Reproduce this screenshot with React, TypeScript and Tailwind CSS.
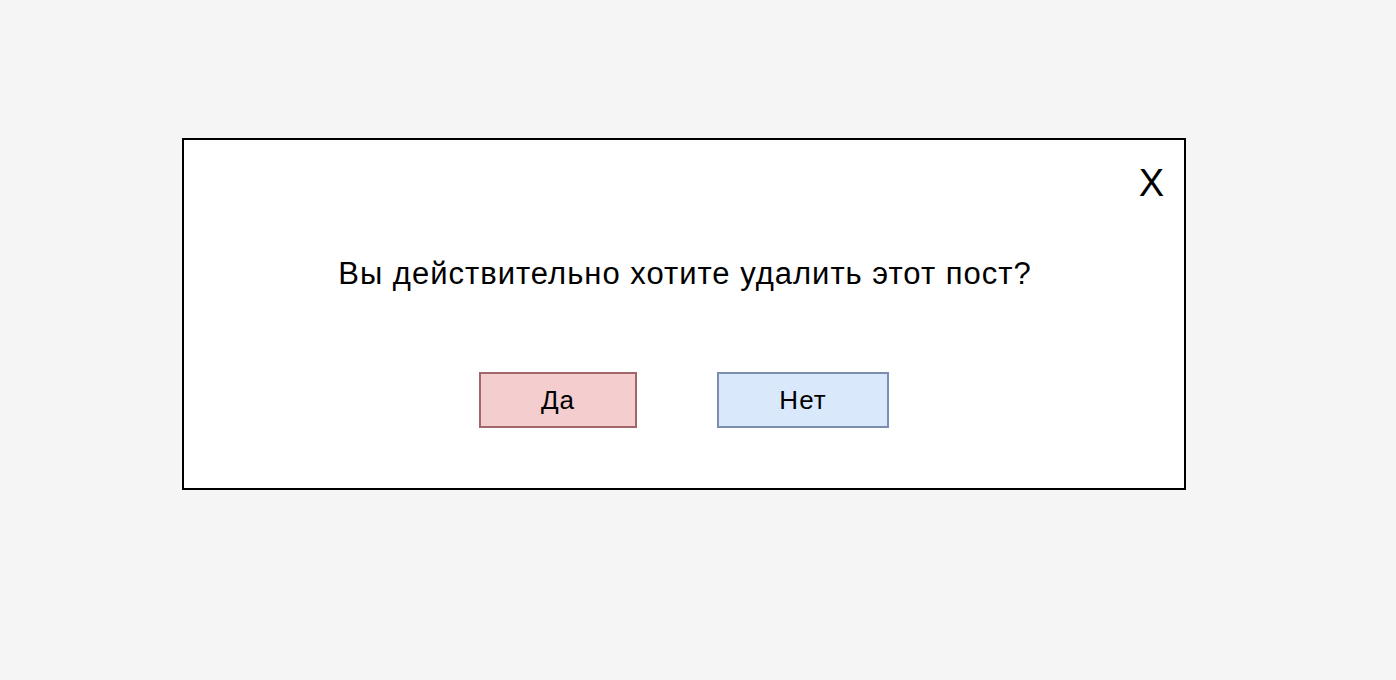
export default function App() {
  return (
    <div className="min-h-screen bg-[#f5f5f5] pt-[138px] pl-[182px]" style={{ fontFamily: '"Liberation Sans", Arial, sans-serif' }}>
      <div className="w-[1004px] h-[352px] border-2 border-black bg-white flex flex-col">
        <div className="flex justify-end items-start pr-[20px] h-[100px]">
          <button className="text-[38px] leading-none text-black mt-[24px]">X</button>
        </div>
        <p className="text-center text-[31px] leading-[36px] tracking-[1px] text-black mt-[16px] pl-[2px]">
          Вы действительно хотите удалить этот пост?
        </p>
        <div className="flex justify-center gap-[80px] mt-[80px]">
          <button className="w-[158px] h-[56px] bg-[#f4cdcf] border-2 border-[#a0666a] text-[26px] tracking-[1px] text-black">Да</button>
          <button className="w-[172px] h-[56px] bg-[#dae8fc] border-2 border-[#7d8fb0] text-[26px] tracking-[1px] text-black">Нет</button>
        </div>
      </div>
    </div>
  )
}
